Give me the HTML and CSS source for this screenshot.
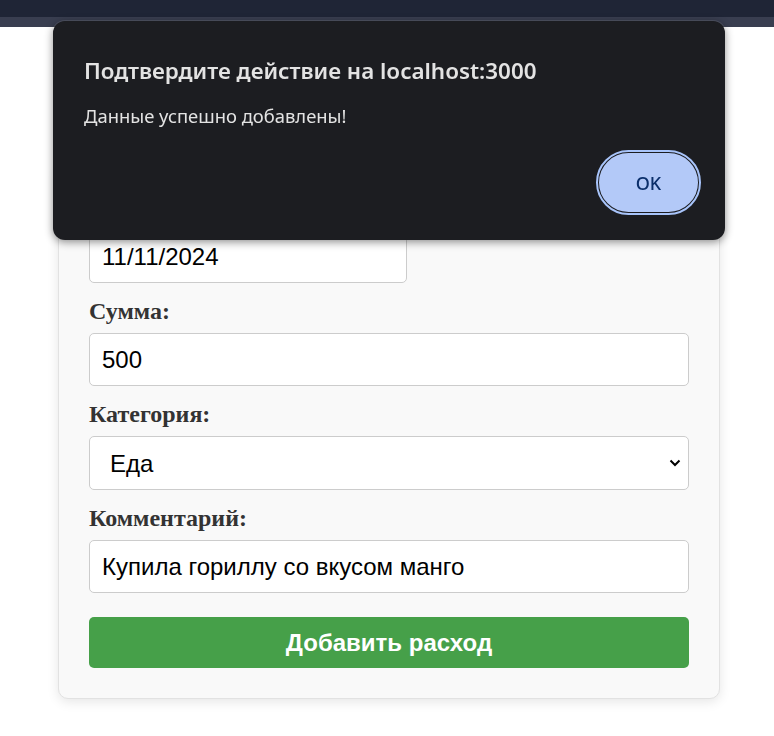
FILE: index.html
```html
<!DOCTYPE html>
<html lang="ru">
<head>
<meta charset="utf-8">
<title>Расходы</title>
<link rel="stylesheet" href="styles.css">
</head>
<body>
<header class="topbar"><div class="topbar-strip"></div></header>
<main class="page">
  <form class="card">
    <label class="field-label">Дата:</label>
    <input class="field field-date" type="text" value="11/11/2024">
    <label class="field-label">Сумма:</label>
    <input class="field" type="text" value="500">
    <label class="field-label">Категория:</label>
    <div class="select-wrap">
      <select class="field field-select">
        <option>Еда</option>
      </select>
      <svg class="chevron" width="12" height="8" viewBox="0 0 12 8"><path d="M1.5 1.5 L6 6 L10.5 1.5" fill="none" stroke="#000" stroke-width="2"/></svg>
    </div>
    <label class="field-label">Комментарий:</label>
    <input class="field" type="text" value="Купила гориллу со вкусом манго">
    <button class="submit" type="button">Добавить расход</button>
  </form>
</main>
<div class="dialog">
  <div class="dialog-title">Подтвердите действие на localhost:3000</div>
  <div class="dialog-msg">Данные успешно добавлены!</div>
  <div class="dialog-actions">
    <button class="ok-btn" type="button">OK</button>
  </div>
</div>
</body>
</html>
```
FILE: styles.css
```css
html, body {
  margin: 0;
  padding: 0;
  background: #ffffff;
}
body {
  font-family: "Liberation Serif", "Times New Roman", serif;
  width: 774px;
  height: 736px;
  overflow: hidden;
}
.topbar {
  background: #1f2536;
  padding-top: 17px;
  box-sizing: border-box;
  height: 27px;
}
.topbar-strip {
  height: 10px;
  background: #393e50;
}
.page {
  padding-left: 59px;
  padding-top: 136px;
}
.card {
  width: 600px;
  padding: 30px;
  background: #f9f9f9;
  border: 1px solid #e2e2e2;
  border-radius: 10px;
  box-shadow: 0 3px 12px rgba(0,0,0,0.10);
  display: flex;
  flex-direction: column;
  box-sizing: content-box;
  margin-left: -1px;
}
.field-label {
  font-weight: bold;
  font-size: 24px;
  line-height: 28px;
  color: #333;
  margin-bottom: 8px;
}
.field {
  box-sizing: border-box;
  width: 600px;
  height: 53px;
  border: 1px solid #cccccc;
  border-radius: 5px;
  background: #fff;
  font-family: "Liberation Sans", Arial, sans-serif;
  font-size: 24px;
  padding: 0 12px;
  color: #000;
  margin: 0 0 14px;
}
.field-date {
  width: 318px;
}
.select-wrap {
  position: relative;
  width: 600px;
}
.field-select {
  appearance: none;
  -webkit-appearance: none;
  padding-left: 20px;
  display: block;
  height: 54px;
}
.chevron {
  position: absolute;
  right: 8px;
  top: 23px;
}
.submit {
  margin-top: 10px;
  height: 51px;
  border: none;
  border-radius: 5px;
  background: #46a049;
  color: #fff;
  font-family: "Liberation Sans", Arial, sans-serif;
  font-weight: bold;
  font-size: 24px;
}
.dialog {
  position: fixed;
  left: 53px;
  top: 21px;
  width: 672px;
  height: 219px;
  box-sizing: border-box;
  background: #1c1d21;
  border-radius: 12px;
  box-shadow: 0 2px 8px rgba(0,0,0,0.45), 0 0 0 1px rgba(255,255,255,0.12);
  padding: 35px 24px 0 31px;
  font-family: "Noto Sans", "Open Sans", sans-serif;
  color: #e3e3e3;
}
.dialog-title {
  font-size: 22.4px;
  font-weight: 600;
  line-height: 30px;
}
.dialog-msg {
  font-size: 18.4px;
  line-height: 24px;
  margin-top: 18px;
}
.dialog-actions {
  display: flex;
  justify-content: flex-end;
  margin-top: 22px;
}
.ok-btn {
  width: 105px;
  height: 65px;
  border-radius: 33px;
  background: #b3c9f8;
  border: 3px solid #1c1d21;
  outline: 2px solid #a8c4fa;
  outline-offset: -2px;
  color: #0b2f6b;
  font-family: "Noto Sans", "Open Sans", sans-serif;
  font-size: 18px;
  font-weight: 500;
}
```
